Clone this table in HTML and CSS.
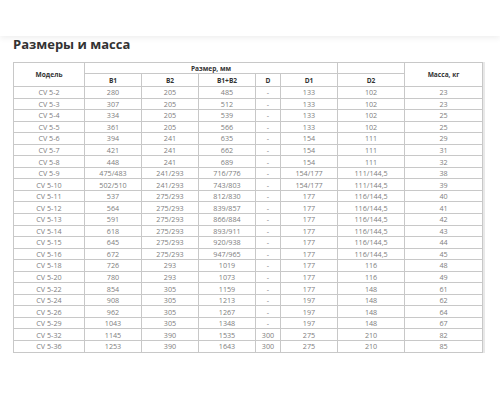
FILE: index.html
```html
<!DOCTYPE html>
<html lang="ru">
<head>
<meta charset="utf-8">
<link rel="stylesheet" href="styles.css">
</head>
<body>
<div class="topbar"></div>
<main class="content">
  <h2 class="title">Размеры и масса</h2>
  <table class="spec">
    <colgroup>
      <col class="c-model"><col class="c-b"><col class="c-b"><col class="c-b"><col class="c-d"><col class="c-b"><col class="c-d2"><col class="c-m">
    </colgroup>
    <thead>
      <tr class="h1">
        <th rowspan="2">Модель</th>
        <th colspan="5">Размер, мм</th>
        <th class="blank"></th>
        <th rowspan="2">Масса, кг</th>
      </tr>
      <tr class="h2">
        <th>B1</th><th>B2</th><th>B1+B2</th><th>D</th><th>D1</th><th>D2</th>
      </tr>
    </thead>
    <tbody>
      <tr><td>CV 5-2</td><td>280</td><td>205</td><td>485</td><td>-</td><td>133</td><td>102</td><td>23</td></tr>
      <tr><td>CV 5-3</td><td>307</td><td>205</td><td>512</td><td>-</td><td>133</td><td>102</td><td>23</td></tr>
      <tr><td>CV 5-4</td><td>334</td><td>205</td><td>539</td><td>-</td><td>133</td><td>102</td><td>25</td></tr>
      <tr><td>CV 5-5</td><td>361</td><td>205</td><td>566</td><td>-</td><td>133</td><td>102</td><td>25</td></tr>
      <tr><td>CV 5-6</td><td>394</td><td>241</td><td>635</td><td>-</td><td>154</td><td>111</td><td>29</td></tr>
      <tr><td>CV 5-7</td><td>421</td><td>241</td><td>662</td><td>-</td><td>154</td><td>111</td><td>31</td></tr>
      <tr><td>CV 5-8</td><td>448</td><td>241</td><td>689</td><td>-</td><td>154</td><td>111</td><td>32</td></tr>
      <tr><td>CV 5-9</td><td>475/483</td><td>241/293</td><td>716/776</td><td>-</td><td>154/177</td><td>111/144,5</td><td>38</td></tr>
      <tr><td>CV 5-10</td><td>502/510</td><td>241/293</td><td>743/803</td><td>-</td><td>154/177</td><td>111/144,5</td><td>39</td></tr>
      <tr><td>CV 5-11</td><td>537</td><td>275/293</td><td>812/830</td><td>-</td><td>177</td><td>116/144,5</td><td>40</td></tr>
      <tr><td>CV 5-12</td><td>564</td><td>275/293</td><td>839/857</td><td>-</td><td>177</td><td>116/144,5</td><td>41</td></tr>
      <tr><td>CV 5-13</td><td>591</td><td>275/293</td><td>866/884</td><td>-</td><td>177</td><td>116/144,5</td><td>42</td></tr>
      <tr><td>CV 5-14</td><td>618</td><td>275/293</td><td>893/911</td><td>-</td><td>177</td><td>116/144,5</td><td>43</td></tr>
      <tr><td>CV 5-15</td><td>645</td><td>275/293</td><td>920/938</td><td>-</td><td>177</td><td>116/144,5</td><td>44</td></tr>
      <tr><td>CV 5-16</td><td>672</td><td>275/293</td><td>947/965</td><td>-</td><td>177</td><td>116/144,5</td><td>45</td></tr>
      <tr><td>CV 5-18</td><td>726</td><td>293</td><td>1019</td><td>-</td><td>177</td><td>116</td><td>48</td></tr>
      <tr><td>CV 5-20</td><td>780</td><td>293</td><td>1073</td><td>-</td><td>177</td><td>116</td><td>49</td></tr>
      <tr><td>CV 5-22</td><td>854</td><td>305</td><td>1159</td><td>-</td><td>177</td><td>148</td><td>61</td></tr>
      <tr><td>CV 5-24</td><td>908</td><td>305</td><td>1213</td><td>-</td><td>197</td><td>148</td><td>62</td></tr>
      <tr><td>CV 5-26</td><td>962</td><td>305</td><td>1267</td><td>-</td><td>197</td><td>148</td><td>64</td></tr>
      <tr><td>CV 5-29</td><td>1043</td><td>305</td><td>1348</td><td>-</td><td>197</td><td>148</td><td>67</td></tr>
      <tr><td>CV 5-32</td><td>1145</td><td>390</td><td>1535</td><td>300</td><td>275</td><td>210</td><td>82</td></tr>
      <tr><td>CV 5-36</td><td>1253</td><td>390</td><td>1643</td><td>300</td><td>275</td><td>210</td><td>85</td></tr>
    </tbody>
  </table>
</main>
</body>
</html>
```

FILE: styles.css
```css
html, body {
  margin: 0;
  padding: 0;
  background: #fff;
}
body {
  font-family: "Open Sans", "Noto Sans", sans-serif;
  color: #333;
}
.topbar {
  height: 36px;
  background: #fff;
  box-shadow: 0 2px 6px rgba(0, 0, 0, 0.07);
  position: relative;
  z-index: 1;
}
.content {
  padding: 0 13px;
}
.title {
  margin: 0;
  padding-top: 0;
  font-size: 13px;
  line-height: 16px;
  font-weight: 700;
  color: #333;
}
.spec {
  margin-top: 10px;
  border-collapse: collapse;
  table-layout: fixed;
  width: 469px;
  box-shadow: 2px 0 0 #e8e8e8;
}
.c-model { width: 71px; }
.c-b { width: 57px; }
.c-d { width: 25px; }
.c-d2 { width: 67px; }
.c-m { width: 78px; }
.spec th, .spec td {
  border: 1px solid #c8c8c8;
  padding: 0;
  text-align: center;
  white-space: nowrap;
}
.spec th {
  font-size: 6.6px;
  font-weight: 700;
  color: #333;
}
.spec .h1 th { height: 10px; }
.spec .h2 th { height: 12px; }
.spec td {
  font-size: 7.2px;
  color: #808080;
  height: 10.55px;
  line-height: 10px;
}
```
